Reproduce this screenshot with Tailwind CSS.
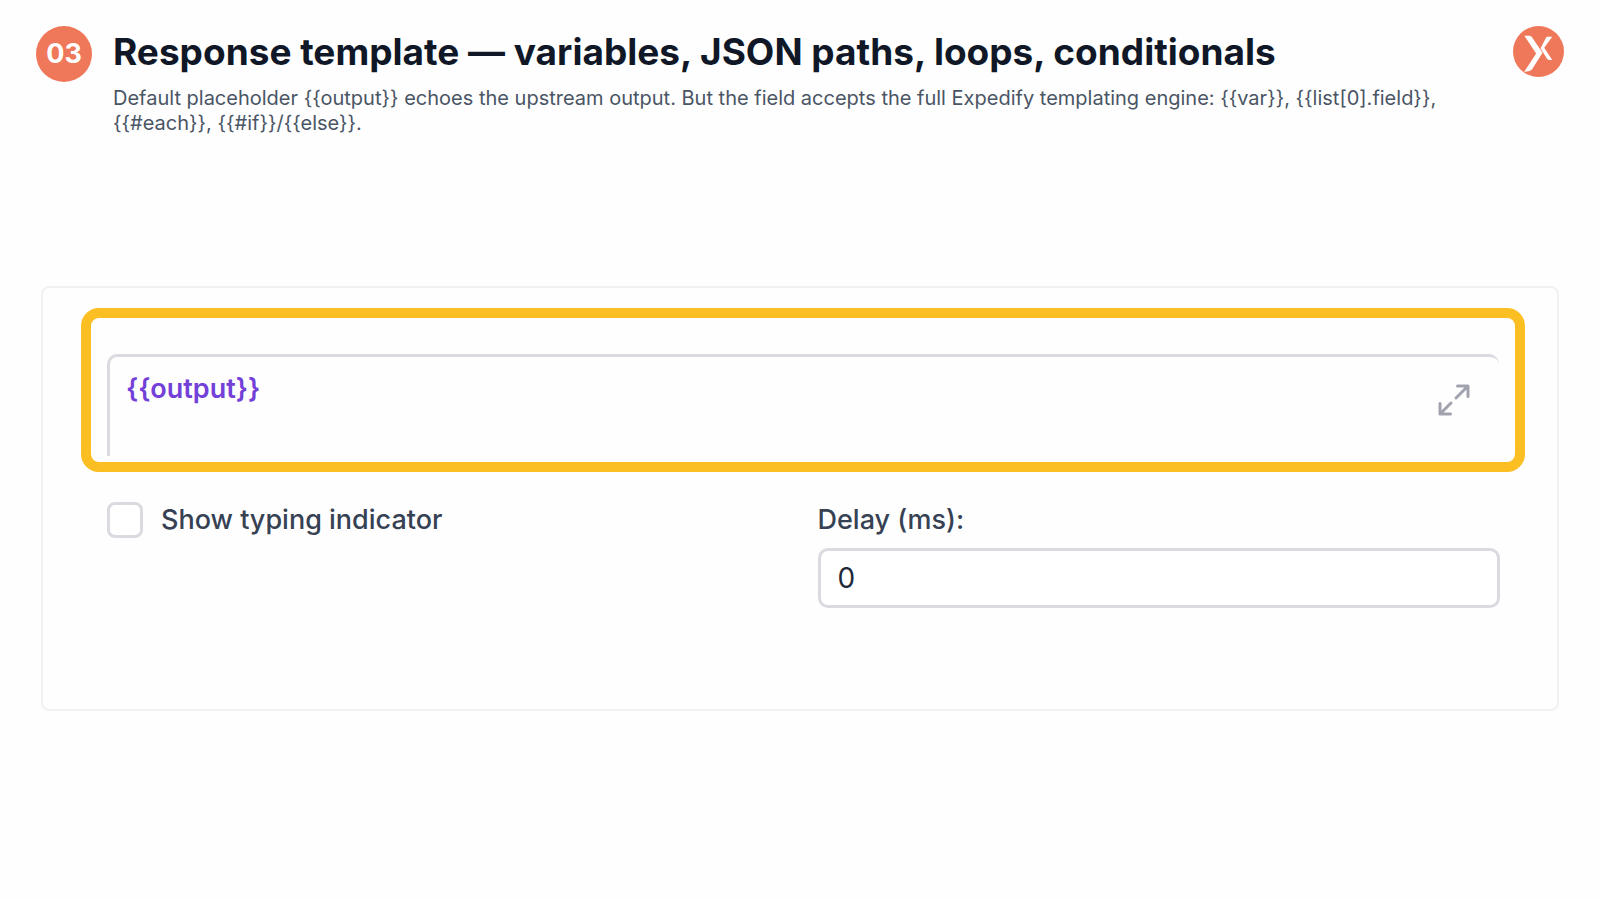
<!DOCTYPE html>
<html lang="en">
<head>
    <meta charset="UTF-8">
    <meta name="viewport" content="width=device-width, initial-scale=1.0">
    <title>Response template</title>
    <script src="https://cdn.jsdelivr.net/npm/@tailwindcss/browser@4"></script>
</head>
<body class="min-h-screen bg-[#fefefe] font-['Inter',sans-serif] text-gray-900">
    <!-- Step heading -->
    <header class="flex items-start gap-[21px] pt-[26px] pr-9 pl-9">
        <span class="flex size-14 shrink-0 items-center justify-center rounded-full bg-[#f0785a] text-[27px] font-bold text-white">03</span>
        <div class="min-w-0 flex-1">
            <h1 class="text-[37px] leading-[52px] font-bold">Response template — variables, JSON paths, loops, conditionals</h1>
            <p class="mt-2 max-w-[1330px] text-[20px] leading-[25px] text-gray-600">Default placeholder {{output}} echoes the upstream output. But the field accepts the full Expedify templating engine: {{var}}, {{list[0].field}}, {{#each}}, {{#if}}/{{else}}.</p>
        </div>
        <svg class="size-[51px] shrink-0" viewBox="99 48 152 152" aria-hidden="true">
            <circle cx="175" cy="124" r="76" fill="#f0785a"/>
            <path d="M133 77H148Q152 77 155 81L187 128L156 177Q153 181 148 182L132 185L168 130Z" fill="#fff"/>
            <path d="M201 80H216L192 113L216 149H207Q203 149 200 145L181 114L197 84Q199 80 201 80Z" fill="#fff"/>
        </svg>
    </header>

    <!-- Form card -->
    <main class="mx-[41px] mt-[150px] rounded-lg border-2 border-[#f1f1f2] px-[38px] pt-5 pb-[101px]">
        <div class="mr-[-6px] rounded-[18px] border-10 border-[#fbbf24] pt-9 pr-4 pl-4">
            <div class="relative">
                <textarea aria-label="Response template" class="mb-[6px] block h-[102px] w-full resize-none rounded-t-[10px] border-t-3 border-l-3 border-[#dadae1] px-4 py-[14px] text-[27px] leading-9 font-semibold text-[#7340d8] outline-none">{{output}}</textarea>
                <button type="button" aria-label="Expand editor" class="absolute top-7 right-[27px] text-[#a0a3ad]">
                    <svg class="size-9" viewBox="0 0 36 36" fill="none" stroke="currentColor" stroke-width="3" stroke-linecap="round" stroke-linejoin="round">
                        <path d="M20 16L32 4M21.500 4H32V14.500M15 21L4 32M4 21.500V32H14.500"/>
                    </svg>
                </button>
            </div>
        </div>
        <div class="mt-7 grid grid-cols-2 gap-7 pr-[19px] pl-[26px]">
            <label class="flex h-10 items-center gap-[18px] text-[27px] font-medium text-gray-700">
                <input type="checkbox" class="size-9 appearance-none rounded-lg border-3 border-[#dadae1] bg-white">
                Show typing indicator
            </label>
            <div>
                <label for="delay" class="flex h-10 items-center text-[27px] font-medium text-gray-700">Delay (ms):</label>
                <input id="delay" type="text" inputmode="numeric" value="0" class="mt-2 block h-[60px] w-full rounded-[10px] border-3 border-[#dadae1] bg-white px-[17px] text-[28px] text-gray-800 outline-none">
            </div>
        </div>
    </main>
</body>
</html>
